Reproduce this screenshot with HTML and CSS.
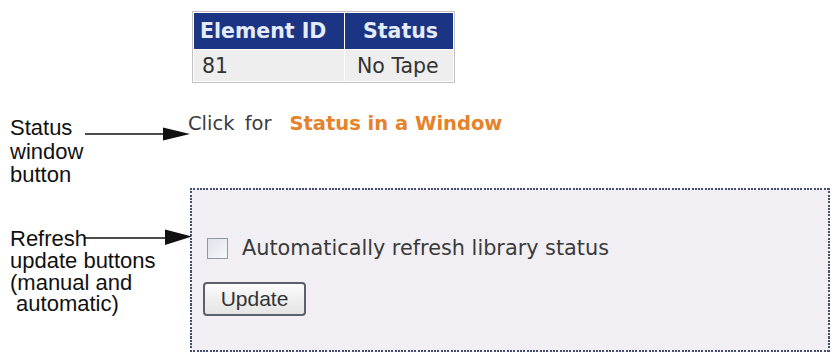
FILE: index.html
```html
<!DOCTYPE html>
<html>
<head>
<meta charset="utf-8">
<title>Library status</title>
<link rel="stylesheet" href="styles.css">
</head>
<body>
<div class="page">
  <div class="row row-table">
    <table class="status-table">
      <tr><th class="col-id">Element ID</th><th class="col-status">Status</th></tr>
      <tr><td class="col-id">81</td><td class="col-status">No Tape</td></tr>
    </table>
  </div>

  <div class="row row-link">
    <div class="note note-status">Status<br>window<br>button
      <svg class="arrow arrow-status" width="110" height="16" viewBox="0 0 110 16">
        <line x1="0" y1="8" x2="82" y2="8" stroke="#111" stroke-width="1.6"/>
        <polygon points="78,1.5 105,8 78,14.5" fill="#111"/>
      </svg>
    </div>
    <p class="link-line"><span class="click-for">Click for</span><a class="status-link" href="#">Status in a Window</a></p>
  </div>

  <div class="row row-refresh">
    <div class="note note-refresh">Refresh<br>update buttons<br>(manual and<br>&nbsp;automatic)
      <svg class="arrow arrow-refresh" width="112" height="20" viewBox="0 0 112 20">
        <line x1="0" y1="10" x2="86" y2="10" stroke="#111" stroke-width="1.6"/>
        <polygon points="80,1.5 107,8.5 80,17" fill="#111"/>
      </svg>
    </div>
    <div class="refresh-box">
      <label class="auto-row"><input type="checkbox" class="auto-check"><span>Automatically refresh library status</span></label>
      <button class="update-btn" type="button">Update</button>
    </div>
  </div>
</div>
</body>
</html>
```

FILE: styles.css
```css
html, body {
  margin: 0;
  padding: 0;
  background: #ffffff;
}

.page {
  width: 834px;
  height: 354px;
  overflow: hidden;
}

.row {
  display: grid;
  grid-template-columns: 190px 640px;
}

/* ---------- table ---------- */
.row-table {
  padding-top: 11px;
}

.status-table {
  grid-column: 2;
  justify-self: start;
  margin-left: 2px;
  width: 263px;
  table-layout: fixed;
  border: 1px solid #c2c2c2;
  border-spacing: 1px;
  background: #ffffff;
  font-family: "DejaVu Sans", Verdana, sans-serif;
  font-size: 20.5px;
}

.status-table th {
  background: #1c3484;
  color: #e4ecfb;
  font-weight: bold;
  height: 36px;
  padding: 0;
  text-align: left;
  vertical-align: middle;
  white-space: nowrap;
}

.status-table td {
  background: #eeeeee;
  color: #333333;
  height: 31px;
  padding: 0;
  vertical-align: middle;
  white-space: nowrap;
}

.status-table th.col-id { width: 144px; padding-left: 6px; }
.status-table th.col-status { width: 90px; padding-left: 18px; }
.status-table td.col-id { padding-left: 8px; }
.status-table td.col-status { padding-left: 12px; }

/* ---------- annotations ---------- */
.note {
  position: relative;
  padding-left: 10px;
  font-family: "Liberation Sans", Arial, sans-serif;
  font-size: 22px;
  color: #111111;
}

.arrow {
  position: absolute;
  display: block;
}

/* ---------- link line ---------- */
.row-link {
  margin-top: 29px;
  height: 76px;
}

.note-status {
  padding-top: 4px;
  line-height: 23.5px;
}

.arrow-status {
  left: 85px;
  top: 14px;
}

.link-line {
  margin: 0 0 0 -2px;
  font-family: "DejaVu Sans", Verdana, sans-serif;
  font-size: 19.5px;
  line-height: 24px;
  color: #3c3c3c;
}

.click-for {
  word-spacing: 4px;
}

.status-link {
  margin-left: 18px;
  color: #e5822c;
  font-weight: bold;
  text-decoration: none;
}

/* ---------- refresh box ---------- */
.note-refresh {
  padding-top: 40px;
  line-height: 21.8px;
}

.arrow-refresh {
  left: 85px;
  top: 40px;
}

.refresh-box {
  box-sizing: border-box;
  width: 640px;
  height: 164px;
  padding: 48px 0 0 17px;
  display: flex;
  flex-direction: column;
  align-items: flex-start;
  gap: 22px;
  background:
    repeating-linear-gradient(to right, #46506e 0 2px, transparent 2px 3.3px) top left / 100% 2px no-repeat,
    repeating-linear-gradient(to right, #46506e 0 2px, transparent 2px 3.3px) bottom left / 100% 2px no-repeat,
    repeating-linear-gradient(to bottom, #46506e 0 2px, transparent 2px 3.3px) top left / 2px 100% no-repeat,
    repeating-linear-gradient(to bottom, #46506e 0 2px, transparent 2px 3.3px) top right / 2px 100% no-repeat,
    #f1eff3;
}

.auto-row {
  display: flex;
  align-items: center;
  gap: 14px;
  font-family: "DejaVu Sans", Verdana, sans-serif;
  font-size: 20.8px;
  line-height: 24px;
  color: #3a3a3a;
}

.auto-check {
  appearance: none;
  -webkit-appearance: none;
  margin: 0;
  width: 21px;
  height: 21px;
  box-sizing: border-box;
  border: 1px solid #8e97a2;
  background: linear-gradient(135deg, #dde3ea, #f7f8fa);
}

.update-btn {
  margin-left: -4px;
  box-sizing: border-box;
  width: 103px;
  height: 34px;
  padding: 0;
  border: 2px solid #5b6068;
  border-radius: 4px;
  background: linear-gradient(to bottom, #fbfbfb, #e4e4e4);
  font-family: "Liberation Sans", Arial, sans-serif;
  font-size: 21px;
  color: #333333;
}
```
